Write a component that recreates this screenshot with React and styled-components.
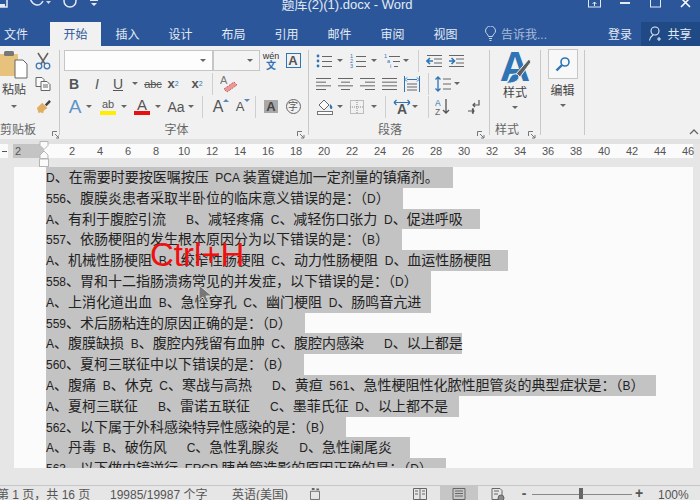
import React from 'react';
import styled, { createGlobalStyle } from 'styled-components';

const GlobalStyle = createGlobalStyle`
  html, body { margin: 0; padding: 0; background: #e6e6e6; }
  #root { width: 700px; height: 500px; overflow: hidden; }
`;

const Window = styled.div`
  width: 700px;
  height: 500px;
  overflow: hidden;
  position: relative;
  display: flex;
  flex-direction: column;
  background: #e6e6e6;
  font-family: "Liberation Sans", "Noto Sans CJK SC", sans-serif;
  color: #444;
`;

const TitleBar = styled.div`
  height: 22px;
  flex: none;
  overflow: hidden;
  background: #2b579a;
  color: #e4eaf3;
`;

const TitleInner = styled.div`
  height: 9px;
  display: grid;
  grid-template-columns: 1fr auto 1fr;
  align-items: center;
`;

const QuickAccess = styled.div`
  display: flex;
  align-items: center;
`;

const QuickIcon = styled.div`
  flex: none;
  width: ${p => p.$w}px;
  margin-left: ${p => p.$ml || 0}px;
  display: flex;
  justify-content: center;
`;

const DocTitle = styled.div`
  font-size: 13px;
  line-height: 9px;
  margin-right: 6px;
  white-space: nowrap;
`;

const WindowButtons = styled.div`
  display: flex;
  justify-content: flex-end;
  align-items: center;
`;

const WindowButton = styled.div`
  width: 30px;
  display: flex;
  justify-content: center;
`;

const TabBar = styled.div`
  height: 24px;
  flex: none;
  display: flex;
  align-items: stretch;
  background: #2b579a;
  color: #e4eaf3;
  font-size: 12px;
`;

const Tab = styled.div`
  width: ${p => p.$w || 53}px;
  box-sizing: border-box;
  padding: 0 ${p => p.$pr || 0}px 2px 0;
  display: flex;
  align-items: center;
  justify-content: center;
  background: ${p => (p.$active ? '#f1f1f1' : 'transparent')};
  color: ${p => (p.$active ? '#2b579a' : 'inherit')};
`;

const TellMe = styled.div`
  margin-left: 13px;
  width: 118px;
  padding-bottom: 2px;
  display: flex;
  align-items: center;
  gap: 5px;
  color: #a9bcd8;
`;

const Login = styled.div`
  width: 34px;
  padding-bottom: 2px;
  display: flex;
  align-items: center;
  justify-content: center;
`;

const Share = styled.div`
  width: 59px;
  margin-left: 4px;
  padding-bottom: 2px;
  display: flex;
  align-items: center;
  justify-content: center;
  gap: 4px;
  background: #1f4a85;
`;

const Ribbon = styled.div`
  height: 93px;
  flex: none;
  position: relative;
  display: flex;
  background: #f1f1f1;
`;

const Group = styled.div`
  flex: none;
  width: ${p => p.$w}px;
  display: flex;
  flex-direction: column;
  padding-top: 3px;
  box-sizing: border-box;
  overflow: hidden;
`;

const GroupBody = styled.div`
  height: 69px;
  flex: none;
  padding-left: ${p => p.$pl || 0}px;
  display: flex;
`;

const Rows = styled.div`
  display: flex;
  flex-direction: column;
`;

const Row = styled.div`
  height: 23px;
  display: flex;
  align-items: center;
`;

const GroupFoot = styled.div`
  flex: 1;
  display: flex;
  align-items: center;
`;

const GroupLabel = styled.div`
  flex: 1;
  text-align: center;
  white-space: nowrap;
  font-size: 12px;
  color: #666;
  padding-right: ${p => p.$pr || 0}px;
`;

const LauncherBox = styled.div`
  flex: none;
  width: 8px;
  height: 8px;
  margin-right: ${p => p.$mr || 3}px;
`;

const GroupRule = styled.div`
  flex: none;
  width: 1px;
  margin: 4px 0;
  background: #c8c8c8;
`;

const Collapse = styled.div`
  position: absolute;
  right: 1px;
  bottom: 4px;
  line-height: 0;
`;

const Cell = styled.div`
  flex: none;
  width: ${p => p.$w}px;
  margin-left: ${p => p.$ml || 0}px;
  height: 20px;
  display: flex;
  align-items: center;
  justify-content: center;
  font-size: ${p => p.$size || 13}px;
  font-weight: ${p => (p.$bold ? 700 : 400)};
  font-style: ${p => (p.$italic ? 'italic' : 'normal')};
  text-decoration: ${p => p.$deco || 'none'};
  color: ${p => p.$color || '#555'};
  white-space: nowrap;
`;

const Sep = styled.div`
  flex: none;
  width: 1px;
  height: 22px;
  margin-left: ${p => p.$ml || 0}px;
  background: #cfcfcf;
`;

const Drop = styled.div`
  flex: none;
  width: ${p => p.$w || 6}px;
  display: flex;
  justify-content: center;
  &::after {
    content: '';
    flex: none;
    border: 3px solid transparent;
    border-top: 3px solid #666;
    border-bottom: 0;
  }
`;

const Combo = styled.div`
  flex: none;
  width: ${p => p.$w}px;
  height: 21px;
  box-sizing: border-box;
  padding-right: 6px;
  display: flex;
  align-items: center;
  justify-content: flex-end;
  background: ${p => p.$bg};
  border: 1px solid #c6c6c6;
`;

const BigColumn = styled.div`
  flex: none;
  width: ${p => p.$w}px;
  display: flex;
  flex-direction: column;
  align-items: center;
  font-size: 12px;
  color: #444;
`;

const PasteLabel = styled.div`
  margin-top: 3px;
  line-height: 16px;
  white-space: nowrap;
`;

const PasteDrop = styled.div`
  margin-top: 7px;
`;

const BigA = styled.div`
  position: relative;
  width: 34px;
  height: 34px;
  text-align: center;
  font-size: 42px;
  font-weight: 700;
  line-height: 36px;
  color: #2f74b5;
`;

const BrushOver = styled.div`
  position: absolute;
  left: 4px;
  top: 8px;
  line-height: 0;
`;

const FindBox = styled.div`
  width: 30px;
  height: 30px;
  box-sizing: border-box;
  display: flex;
  align-items: center;
  justify-content: center;
  background: #f8f8f8;
  border: 1px solid #c6c6c6;
`;

const ColLabel = styled.div`
  margin-top: ${p => p.$mt || 0}px;
  line-height: 16px;
`;

const ColDrop = styled.div`
  margin-top: 5px;
`;

const BarLetter = styled.div`
  display: flex;
  flex-direction: column;
  align-items: center;
  line-height: 13px;
`;

const ColorBar = styled.div`
  width: 16px;
  height: 4px;
  background: ${p => p.$color};
`;

const BoxA = styled.div`
  width: 15px;
  height: 15px;
  box-sizing: border-box;
  border: 1px solid #2f74b5;
  font-size: 13px;
  font-weight: 700;
  line-height: 14px;
  text-align: center;
  color: #555;
`;

const ShadeA = styled.div`
  width: 14px;
  height: 13px;
  background: #a8a8a8;
  font-size: 13px;
  font-weight: 700;
  line-height: 13px;
  text-align: center;
  color: #444;
`;

const CircleChar = styled.div`
  width: 15px;
  height: 15px;
  box-sizing: border-box;
  border: 1px solid #666;
  border-radius: 50%;
  font-size: 10px;
  line-height: 13px;
  text-align: center;
`;

const Wen = styled.div`
  display: flex;
  flex-direction: column;
  align-items: center;
  font-size: 9px;
  line-height: 9px;
  color: #333;
`;

const WenChar = styled.span`
  color: #2f74b5;
  font-size: 10px;
  font-weight: 700;
`;

const GrowLetter = styled.div`
  position: relative;
  font-size: ${p => p.$size}px;
  color: #555;
`;

const Caret = styled.span`
  position: absolute;
  top: ${p => p.$top}px;
  left: 100%;
  border: 3px solid transparent;
  ${p => (p.$down ? 'border-top: 3px solid #5b86b8; border-bottom: 0;' : 'border-bottom: 3px solid #5b86b8; border-top: 0;')}
`;

const Sub = styled.sub`
  font-size: 7px;
  font-weight: 400;
  color: #2f74b5;
`;

const Sup = styled.sup`
  font-size: 7px;
  font-weight: 400;
  color: #2f74b5;
`;

const Band = styled.div`
  height: 5px;
  flex: none;
  background: #e2e2e2;
`;

const RulerRow = styled.div`
  height: 14px;
  flex: none;
  position: relative;
  display: flex;
  align-items: stretch;
`;

const TabStop = styled.div`
  width: 8px;
  margin-right: 5px;
  display: flex;
  align-items: center;
  justify-content: center;
  background: #fafafa;
  &::after {
    content: '';
    width: 5px;
    height: 1px;
    background: #555;
  }
`;

const RulerMargin = styled.div`
  width: 31px;
  box-sizing: border-box;
  padding-left: 2px;
  background: #c4c4c4;
  font-size: 11px;
  line-height: 14px;
  color: #555;
`;

const RulerBody = styled.div`
  width: 649px;
  padding-left: 14px;
  box-sizing: border-box;
  display: flex;
  background: #fbfbfb;
`;

const RulerNum = styled.div`
  flex: none;
  width: 28px;
  text-align: center;
  font-size: 11px;
  line-height: 14px;
  color: #555;
`;

const IndentMarks = styled.div`
  position: absolute;
  left: 39px;
  top: -3px;
  line-height: 0;
`;

const DocArea = styled.div`
  flex: 1;
  min-height: 0;
  padding: 9px 7px 17px 14px;
  display: flex;
`;

const Page = styled.div`
  flex: 1;
  overflow: hidden;
  padding-left: 32px;
  background: #fbfbfb;
`;

const Line = styled.div`
  width: ${p => p.$w}px;
  height: 20.8px;
  box-sizing: border-box;
  padding-bottom: 2.8px;
  line-height: 18px;
  font-size: 14px;
  white-space: pre;
  color: #222;
  background: #c3c3c3;
  font-family: "Noto Sans CJK SC", sans-serif;
`;

const Latin = styled.span`
  font-family: "Liberation Sans", sans-serif;
  font-size: 12px;
`;

const StatusBar = styled.div`
  height: 14px;
  flex: none;
  box-sizing: content-box;
  display: flex;
  align-items: flex-start;
  border-top: 1px solid #c6c6c6;
  font-size: 12px;
  line-height: 15px;
  color: #555;
  overflow: hidden;
`;

const StatusText = styled.div`
  flex: none;
  width: ${p => p.$w}px;
  margin-left: ${p => p.$ml || 0}px;
  padding-top: 2px;
  white-space: nowrap;
`;

const ViewButton = styled.div`
  flex: none;
  width: ${p => p.$w}px;
  height: 14px;
  display: flex;
  justify-content: center;
  padding-top: 2px;
  box-sizing: border-box;
  background: ${p => (p.$active ? '#c6c6c6' : 'transparent')};
`;

const ZoomSlider = styled.div`
  flex: none;
  width: 100px;
  height: 8px;
  margin: 0 1px 0 2px;
  position: relative;
  border-bottom: 1px solid #888;
`;

const ZoomThumb = styled.div`
  position: absolute;
  left: 47px;
  top: 2px;
  width: 4px;
  height: 11px;
  background: #666;
`;

const ZoomMark = styled.div`
  flex: none;
  width: 12px;
  margin-left: ${p => p.$ml || 0}px;
  text-align: center;
  font-weight: 700;
  font-size: 14px;
  color: #555;
`;

const ShortcutHint = styled.div`
  position: absolute;
  left: 150px;
  top: 236px;
  font-family: "Liberation Sans", sans-serif;
  font-size: 33px;
  line-height: 38px;
  color: #f01010;
  white-space: nowrap;
`;

const Pointer = styled.svg`
  position: absolute;
  left: 198px;
  top: 284px;
`;

const Lines = ({ rows, w = 16, color = '#666' }) => (
  <svg width={w} height={14} viewBox={`0 0 ${w} 14`}>
    {rows.map(([x1, x2], i) => (
      <line key={i} x1={x1} x2={x2} y1={1.5 + (i * 11) / (rows.length - 1)} y2={1.5 + (i * 11) / (rows.length - 1)} stroke={color} strokeWidth="1" />
    ))}
  </svg>
);

const Launcher = ({ mr }) => (
  <LauncherBox $mr={mr}>
    <svg width="8" height="8" viewBox="0 0 8 8" fill="none" stroke="#777">
      <path d="M0.5 5V0.5H5" />
      <path d="M3 3L7 7M7 4V7H4" />
    </svg>
  </LauncherBox>
);

const PasteIcon = () => (
  <svg width="28" height="30" viewBox="0 0 28 30">
    <rect x="-6" y="5" width="24" height="22" rx="1" fill="#e6c27c" />
    <rect x="4" y="2" width="10" height="5" rx="1.5" fill="#777" />
    <path d="M15 11h8l4 4v14H15z" fill="#fff" stroke="#666" />
  </svg>
);

const ScissorsIcon = () => (
  <svg width="16" height="18" viewBox="0 0 16 18" fill="none">
    <path d="M3 1l7 11M13 1L6 12" stroke="#666" strokeWidth="1.6" />
    <circle cx="4" cy="14" r="2.8" stroke="#3d78b0" strokeWidth="1.3" />
    <circle cx="12" cy="14" r="2.8" stroke="#3d78b0" strokeWidth="1.3" />
  </svg>
);

const CopyIcon = () => (
  <svg width="16" height="14" viewBox="0 0 16 14" fill="#fafafa" stroke="#666">
    <path d="M1 .5h6l2 2v7H1z" />
    <path d="M6 4.5h6l3 3v6H6z" />
    <path d="M8 8h5M8 10h5" />
  </svg>
);

const BrushIcon = () => (
  <svg width="15" height="14" viewBox="0 0 17 16">
    <path d="M10 5l5-5 2 2-5 5z" fill="#444" />
    <path d="M1 9l6-6 6 6-4 3-1 3-3-1-2 1z" fill="#dfae62" />
  </svg>
);

const EraserIcon = () => (
  <svg width="18" height="20" viewBox="0 0 18 20">
    <text x="0" y="10" fontSize="11" fill="#777" fontFamily="Liberation Sans">A</text>
    <path d="M4 15l10-7 3 3-10 7z" fill="#e79a9a" stroke="#d85d5d" strokeDasharray="2 1" />
  </svg>
);

const BulletsIcon = () => (
  <svg width="16" height="14" viewBox="0 0 16 14" stroke="#666">
    <circle cx="2" cy="2" r="1.4" fill="#2f74b5" stroke="none" />
    <circle cx="2" cy="7" r="1.4" fill="#2f74b5" stroke="none" />
    <circle cx="2" cy="12" r="1.4" fill="#2f74b5" stroke="none" />
    <path d="M6 2.5h10M6 7.5h10M6 12.5h10" />
  </svg>
);

const NumberedIcon = () => (
  <svg width="16" height="15" viewBox="0 0 16 15" stroke="#666">
    <text x="0" y="5" fontSize="5.5" fill="#2f74b5" stroke="none" fontFamily="Liberation Sans">1</text>
    <text x="0" y="10" fontSize="5.5" fill="#2f74b5" stroke="none" fontFamily="Liberation Sans">2</text>
    <text x="0" y="15" fontSize="5.5" fill="#2f74b5" stroke="none" fontFamily="Liberation Sans">3</text>
    <path d="M6 3.5h10M6 8.5h10M6 13.5h10" />
  </svg>
);

const MultilevelIcon = () => (
  <svg width="16" height="15" viewBox="0 0 16 15" stroke="#666">
    <text x="0" y="5" fontSize="5.5" fill="#2f74b5" stroke="none" fontFamily="Liberation Sans">1</text>
    <text x="3" y="10" fontSize="5.5" fill="#2f74b5" stroke="none" fontFamily="Liberation Sans">a</text>
    <text x="6" y="15" fontSize="5.5" fill="#2f74b5" stroke="none" fontFamily="Liberation Sans">i</text>
    <path d="M5 3.5h11M9 8.5h7M10 13.5h4" />
  </svg>
);

const IndentIcon = ({ flip }) => (
  <svg width="16" height="14" viewBox="0 0 16 14" stroke="#666">
    <path d="M1 1.5h15M8 5h8M8 9h8M1 12.5h15" />
    {flip
      ? <path d="M1 7h5M3.5 4l3 3-3 3" stroke="#2f74b5" strokeWidth="1.6" fill="none" />
      : <path d="M7 7H1M4 4L1 7l3 3" stroke="#2f74b5" strokeWidth="1.6" fill="none" />}
  </svg>
);

const DistributedIcon = () => (
  <svg width="16" height="16" viewBox="0 0 16 16" stroke="#666" fill="none">
    <path d="M.5 0v16M15.5 0v16" stroke="#2f74b5" />
    <path d="M3 3.5h10M3 1.5l-2 2 2 2M13 1.5l2 2-2 2" stroke="#2f74b5" />
    <path d="M3 8h10M3 11h10M3 14h10" />
  </svg>
);

const SpacingIcon = () => (
  <svg width="16" height="16" viewBox="0 0 16 16" stroke="#666" fill="none">
    <path d="M3 1v14M.5 3.5L3 1l2.5 2.5M.5 12.5L3 15l2.5-2.5" stroke="#2f74b5" strokeWidth="1.3" />
    <path d="M8 3h8M8 8h8M8 13h8" />
  </svg>
);

const ShadingIcon = () => (
  <svg width="17" height="16" viewBox="0 0 17 16">
    <path d="M2 6l5-5 5 5-5 5z" fill="#fafafa" stroke="#666" />
    <path d="M13 5c2 2 3 3 2 4.500s-3 0-2-4.500z" fill="#2f74b5" />
    <rect x=".5" y="12.500" width="15" height="3" fill="#fff" stroke="#777" />
  </svg>
);

const BorderIcon = () => (
  <svg width="14" height="14" viewBox="0 0 14 14" fill="none" stroke="#888" strokeDasharray="1 1">
    <rect x=".5" y=".5" width="13" height="13" />
    <path d="M7 0v14M0 7h14" />
  </svg>
);

const AsianLayoutIcon = () => (
  <svg width="18" height="16" viewBox="0 0 18 16">
    <text x="4" y="15" fontSize="14" fontWeight="700" fill="#555" fontFamily="Liberation Sans">A</text>
    <path d="M1 3.500h16M1 3.500l2.500-2.500M1 3.500L3.500 6M17 3.500L14.500 1M17 3.500L14.500 6" stroke="#2f74b5" strokeWidth="1.2" fill="none" />
  </svg>
);

const SortIcon = () => (
  <svg width="16" height="17" viewBox="0 0 16 17">
    <text x="0" y="8" fontSize="8.500" fill="#2f74b5" fontFamily="Liberation Sans">A</text>
    <text x="0" y="16.500" fontSize="8.500" fill="#666" fontFamily="Liberation Sans">Z</text>
    <path d="M11 1v14M8 12l3 3 3-3" stroke="#555" strokeWidth="1.3" fill="none" />
  </svg>
);

const ParagraphIcon = () => (
  <svg width="12" height="14" viewBox="0 0 12 14" fill="none" stroke="#555" strokeWidth="1.2">
    <path d="M11 0v5H5M7 3L5 5l2 2" />
    <path d="M0 11h6M4 9l2 2-2 2" />
    <path d="M5 8v6" />
  </svg>
);

const BrushOnA = () => (
  <svg width="30" height="28" viewBox="0 0 30 28">
    <path d="M14 17L27 2l2 3-11 15z" fill="#5f5f5f" stroke="#f1f1f1" />
    <path d="M4 26c3-1 3-5 6-8 3-2 7-1 7 2 0 4-7 7-13 6z" fill="#2f74b5" stroke="#f1f1f1" />
  </svg>
);

const SearchIcon = () => (
  <svg width="16" height="16" viewBox="0 0 16 16" fill="none" stroke="#2f74b5">
    <circle cx="10" cy="6" r="4" strokeWidth="1.6" />
    <path d="M7 9L1.500 14.500" strokeWidth="2.4" />
  </svg>
);

const Bulb = () => (
  <svg width="11" height="15" viewBox="0 0 11 15" fill="none" stroke="#c7d4e7">
    <path d="M3.500 10.500C3 8 .5 7.500.5 5a5 5 0 0 1 10 0c0 2.500-2.500 3-3 5.500z" />
    <path d="M4 12.500h3M4.500 14.500h2" />
  </svg>
);

const Person = () => (
  <svg width="14" height="15" viewBox="0 0 14 15" fill="none" stroke="#e4eaf3" strokeWidth="1.1">
    <circle cx="6" cy="5" r="4" />
    <path d="M.5 14.500c.5-3 2-4.500 3.500-5.500M10 11v4M8 13h4" />
  </svg>
);

const Pages = ({ children }) => (
  <svg width="16" height="12" viewBox="0 0 16 12" fill="none" stroke="#666">{children}</svg>
);

const NUMS = [2, 4, 6, 8, 10, 12, 14, 16, 18, 20, 22, 24, 26, 28, 30, 32, 34, 36, 38, 40, 42, 44, 46];

const DOC_LINES = [
  ['D、在需要时要按医嘱按压  PCA 装置键追加一定剂量的镇痛剂。', 407],
  ['556、腹膜炎患者采取半卧位的临床意义错误的是：（D）', 357],
  ['A、有利于腹腔引流      B、减轻疼痛  C、减轻伤口张力  D、促进呼吸', 434],
  ['557、依肠梗阻的发生根本原因分为以下错误的是：（B）', 356],
  ['A、机械性肠梗阻  B、绞窄性肠梗阻  C、动力性肠梗阻  D、血运性肠梗阻', 462],
  ['558、胃和十二指肠溃疡常见的并发症，以下错误的是：（D）', 385],
  ['A、上消化道出血  B、急性穿孔  C、幽门梗阻  D、肠鸣音亢进', 385],
  ['559、术后肠粘连的原因正确的是：（D）', 259],
  ['A、腹膜缺损  B、腹腔内残留有血肿  C、腹腔内感染      D、以上都是', 416],
  ['560、夏柯三联征中以下错误的是：（B）', 258],
  ['A、腹痛  B、休克  C、寒战与高热      D、黄疸  561、急性梗阻性化脓性胆管炎的典型症状是：（B）', 610],
  ['A、夏柯三联征      B、雷诺五联征      C、墨菲氏征  D、以上都不是', 413],
  ['562、以下属于外科感染特异性感染的是：（B）', 300],
  ['A、丹毒  B、破伤风      C、急性乳腺炎      D、急性阑尾炎', 364],
  ['563、以下做内镜逆行  ERCP 胰单管造影的原因正确的是：（D）', 400],
];

const Mixed = ({ text }) =>
  text.split(/([A-Za-z0-9 ]+)/).map((part, i) =>
    /^[A-Za-z0-9 ]+$/.test(part) ? <Latin key={i}>{part}</Latin> : part
  );

const Title = () => (
  <TitleBar>
    <TitleInner>
      <QuickAccess>
        <QuickIcon $w={8}>
          <svg width="8" height="9" viewBox="0 0 8 9"><rect x="-6" y="-6" width="13" height="13" fill="none" stroke="#e4eaf3" strokeWidth="1.500" /><rect x="0" y="4" width="5" height="3" fill="#e4eaf3" /></svg>
        </QuickIcon>
        <QuickIcon $w={16} $ml={20}>
          <svg width="15" height="9" viewBox="0 0 15 9" fill="none" stroke="#e4eaf3" strokeWidth="1.500"><path d="M1-2c2 7 9 10 13 3" /></svg>
        </QuickIcon>
        <QuickIcon $w={6} $ml={1}>
          <svg width="5" height="9" viewBox="0 0 5 9" fill="#cdd8e8"><path d="M0 1h5L2.500 4z" /></svg>
        </QuickIcon>
        <QuickIcon $w={14} $ml={12}>
          <svg width="14" height="9" viewBox="0 0 14 9" fill="none" stroke="#e4eaf3" strokeWidth="1.500"><circle cx="7" cy="1" r="6" /></svg>
        </QuickIcon>
        <QuickIcon $w={8} $ml={13}>
          <svg width="8" height="9" viewBox="0 0 8 9" fill="#e4eaf3"><path d="M0 0h8v1H0zM1 3h6L4 6z" /></svg>
        </QuickIcon>
      </QuickAccess>
      <DocTitle>题库(2)(1).docx - Word</DocTitle>
      <WindowButtons>
        <WindowButton>
          <svg width="14" height="9" viewBox="0 0 14 9" fill="none" stroke="#e4eaf3"><rect x=".5" y="-3" width="12" height="10" /><path d="M6.500 6V2M4.500 4l2-2 2 2" /></svg>
        </WindowButton>
        <WindowButton>
          <svg width="10" height="9" viewBox="0 0 10 9" fill="#e4eaf3"><rect y="2" width="10" height="2" /></svg>
        </WindowButton>
        <WindowButton>
          <svg width="11" height="9" viewBox="0 0 11 9" fill="none" stroke="#e4eaf3"><rect x=".5" y="-3" width="10" height="10" /></svg>
        </WindowButton>
        <WindowButton>
          <svg width="11" height="9" viewBox="0 0 11 9" fill="none" stroke="#fff" strokeWidth="1.500"><path d="M1-2l9 9M10-2L1 7" /></svg>
        </WindowButton>
      </WindowButtons>
    </TitleInner>
  </TitleBar>
);

const Tabs = () => (
  <TabBar>
    <Tab $w={50} $pr={18}>文件</Tab>
    <Tab $w={51} $active>开始</Tab>
    {['插入', '设计', '布局', '引用', '邮件', '审阅', '视图'].map(t => <Tab key={t}>{t}</Tab>)}
    <TellMe><Bulb />告诉我...</TellMe>
    <Login>登录</Login>
    <Share><Person />共享</Share>
  </TabBar>
);

const ClipboardGroup = () => (
  <Group $w={59}>
    <GroupBody>
      <BigColumn $w={28}>
        <PasteIcon />
        <PasteLabel>粘贴</PasteLabel>
        <PasteDrop><Drop /></PasteDrop>
      </BigColumn>
      <Rows>
        <Row><Cell $w={30}><ScissorsIcon /></Cell></Row>
        <Row><Cell $w={30}><CopyIcon /></Cell></Row>
        <Row><Cell $w={30}><BrushIcon /></Cell></Row>
      </Rows>
    </GroupBody>
    <GroupFoot>
      <GroupLabel $pr={16}>剪贴板</GroupLabel>
      <Launcher mr={4} />
    </GroupFoot>
  </Group>
);

const FontGroup = () => (
  <Group $w={248}>
    <GroupBody $pl={4}>
      <Rows>
        <Row>
          <Combo $w={149} $bg="#fdfdfd"><Drop /></Combo>
          <Combo $w={47} $bg="#f4f4f4"><Drop /></Combo>
          <Cell $w={22}><Wen>wén<WenChar>文</WenChar></Wen></Cell>
          <Cell $w={22}><BoxA>A</BoxA></Cell>
        </Row>
        <Row>
          <Cell $w={20} $bold $size={14}>B</Cell>
          <Cell $w={26} $italic $size={14}>I</Cell>
          <Cell $w={16} $size={14} $deco="underline">U</Cell>
          <Cell $w={18}><Drop /></Cell>
          <Cell $w={18} $size={11} $deco="line-through">abc</Cell>
          <Cell $w={22} $bold $size={13}>x<Sub>2</Sub></Cell>
          <Cell $w={26} $bold $size={13}>x<Sup>2</Sup></Cell>
          <Sep $ml={2} />
          <Cell $w={30} $ml={1}><EraserIcon /></Cell>
        </Row>
        <Row>
          <Cell $w={22} $size={19} $color="#5f93c8">A</Cell>
          <Drop />
          <Cell $w={26} $ml={3} $size={11}>
            <BarLetter>ab<ColorBar $color="#ffee00" /></BarLetter>
          </Cell>
          <Drop />
          <Cell $w={26} $ml={2} $size={15}>
            <BarLetter>A<ColorBar $color="#e81010" /></BarLetter>
          </Cell>
          <Drop />
          <Cell $w={26} $ml={2} $size={14}>Aa</Cell>
          <Drop $w={4} />
          <Sep $ml={9} />
          <Cell $w={22} $ml={4}><GrowLetter $size={16}>A<Caret $top={1} /></GrowLetter></Cell>
          <Cell $w={22}><GrowLetter $size={13}>A<Caret $top={0} $down /></GrowLetter></Cell>
          <Sep $ml={4} />
          <Cell $w={22} $ml={4}><ShadeA>A</ShadeA></Cell>
          <Cell $w={22}><CircleChar>字</CircleChar></Cell>
        </Row>
      </Rows>
    </GroupBody>
    <GroupFoot>
      <GroupLabel $pr={4}>字体</GroupLabel>
      <Launcher />
    </GroupFoot>
  </Group>
);

const ParagraphGroup = () => (
  <Group $w={180}>
    <GroupBody $pl={4}>
      <Rows>
        <Row>
          <Cell $w={22}><BulletsIcon /></Cell>
          <Drop $w={10} />
          <Cell $w={22} $ml={2}><NumberedIcon /></Cell>
          <Drop $w={10} />
          <Cell $w={22} $ml={2}><MultilevelIcon /></Cell>
          <Drop />
          <Sep $ml={9} />
          <Cell $w={22} $ml={4}><IndentIcon /></Cell>
          <Cell $w={22}><IndentIcon flip /></Cell>
        </Row>
        <Row>
          <Cell $w={22}><Lines rows={[[0, 15], [0, 10], [0, 15], [0, 10]]} /></Cell>
          <Cell $w={22}><Lines rows={[[0, 15], [3, 12], [0, 15], [3, 12]]} /></Cell>
          <Cell $w={22}><Lines rows={[[0, 15], [5, 15], [0, 15], [5, 15]]} /></Cell>
          <Cell $w={22}><Lines rows={[[0, 15], [0, 15], [0, 15], [0, 15]]} /></Cell>
          <Cell $w={22}><DistributedIcon /></Cell>
          <Sep $ml={5} />
          <Cell $w={22} $ml={3}><SpacingIcon /></Cell>
          <Drop />
        </Row>
        <Row>
          <Cell $w={24}><ShadingIcon /></Cell>
          <Drop />
          <Cell $w={22} $ml={3}><BorderIcon /></Cell>
          <Drop $w={12} />
          <Sep $ml={5} />
          <Cell $w={22} $ml={5}><AsianLayoutIcon /></Cell>
          <Drop $w={4} />
          <Sep $ml={11} />
          <Cell $w={22} $ml={3}><SortIcon /></Cell>
          <Cell $w={22} $ml={9}><ParagraphIcon /></Cell>
        </Row>
      </Rows>
    </GroupBody>
    <GroupFoot>
      <GroupLabel $pr={6}>段落</GroupLabel>
      <Launcher mr={4} />
    </GroupFoot>
  </Group>
);

const StylesGroup = () => (
  <Group $w={50}>
    <GroupBody>
      <BigColumn $w={50}>
        <BigA>A<BrushOver><BrushOnA /></BrushOver></BigA>
        <ColLabel $mt={2}>样式</ColLabel>
        <ColDrop><Drop /></ColDrop>
      </BigColumn>
    </GroupBody>
    <GroupFoot>
      <GroupLabel $pr={4}>样式</GroupLabel>
      <Launcher mr={4} />
    </GroupFoot>
  </Group>
);

const EditGroup = () => (
  <Group $w={43}>
    <GroupBody>
      <BigColumn $w={43}>
        <FindBox><SearchIcon /></FindBox>
        <ColLabel $mt={4}>编辑</ColLabel>
        <ColDrop><Drop /></ColDrop>
      </BigColumn>
    </GroupBody>
  </Group>
);

const RibbonPanel = () => (
  <Ribbon>
    <ClipboardGroup />
    <GroupRule />
    <FontGroup />
    <GroupRule />
    <ParagraphGroup />
    <GroupRule />
    <StylesGroup />
    <GroupRule />
    <EditGroup />
    <GroupRule />
    <Collapse>
      <svg width="10" height="6" viewBox="0 0 10 6" fill="none" stroke="#666" strokeWidth="1.300"><path d="M1 5l4-4 4 4" /></svg>
    </Collapse>
  </Ribbon>
);

const Ruler = () => (
  <RulerRow>
    <TabStop />
    <RulerMargin>2</RulerMargin>
    <RulerBody>
      {NUMS.map(n => <RulerNum key={n}>{n}</RulerNum>)}
    </RulerBody>
    <IndentMarks>
      <svg width="10" height="26" viewBox="0 0 10 26" fill="#fafafa" stroke="#b5b5b5">
        <path d="M1 .5h8v4L5 8.500 1 4.500z" />
        <path d="M5 10l4 4v3.500H1V14z" />
        <rect x=".5" y="18" width="9" height="7.500" />
      </svg>
    </IndentMarks>
  </RulerRow>
);

const Status = () => (
  <StatusBar>
    <StatusText $w={113} $ml={-3}>第 1 页，共 16 页</StatusText>
    <StatusText $w={122}>19985/19987 个字</StatusText>
    <StatusText $w={78}>英语(美国)</StatusText>
    <ViewButton $w={10}>
      <svg width="11" height="12" viewBox="0 0 11 12" fill="none" stroke="#666"><path d="M.5 3h10v9H.5z" /><path d="M2 .5h3M7 1h3" strokeWidth="2" /></svg>
    </ViewButton>
    <StatusText $w={90} />
    <ViewButton $w={20}><Pages><path d="M8 1v11M1.500 .5h13v11h-13zM3 3h3M3 6h3M10 3h3M10 6h3" /></Pages></ViewButton>
    <ViewButton $w={10} />
    <ViewButton $w={38} $active><Pages><path d="M2 .5h12v11H2zM4 3h8M4 5.500h8M4 8h8" /></Pages></ViewButton>
    <ViewButton $w={38}><Pages><path d="M3 .5h8l2 2v5M3 .5v11h6M5 3h5M5 6h4" /><circle cx="12" cy="10" r="3" fill="#888" /></Pages></ViewButton>
    <ZoomMark $ml={2}>-</ZoomMark>
    <ZoomSlider><ZoomThumb /></ZoomSlider>
    <ZoomMark>+</ZoomMark>
    <StatusText $w={40} $ml={13}>100%</StatusText>
  </StatusBar>
);

export default function App() {
  return (
    <>
      <GlobalStyle />
      <Window>
        <Title />
        <Tabs />
        <RibbonPanel />
        <Band />
        <Ruler />
        <DocArea>
          <Page>
            {DOC_LINES.map(([text, w]) => (
              <Line key={text} $w={w}><Mixed text={text} /></Line>
            ))}
          </Page>
        </DocArea>
        <Status />
        <ShortcutHint>Ctrl+H</ShortcutHint>
        <Pointer width="15" height="20" viewBox="0 0 15 20">
          <path d="M1 1v15l4-3 3 6 3-1-3-6h6z" fill="#777" stroke="#ddd" />
        </Pointer>
      </Window>
    </>
  );
}
